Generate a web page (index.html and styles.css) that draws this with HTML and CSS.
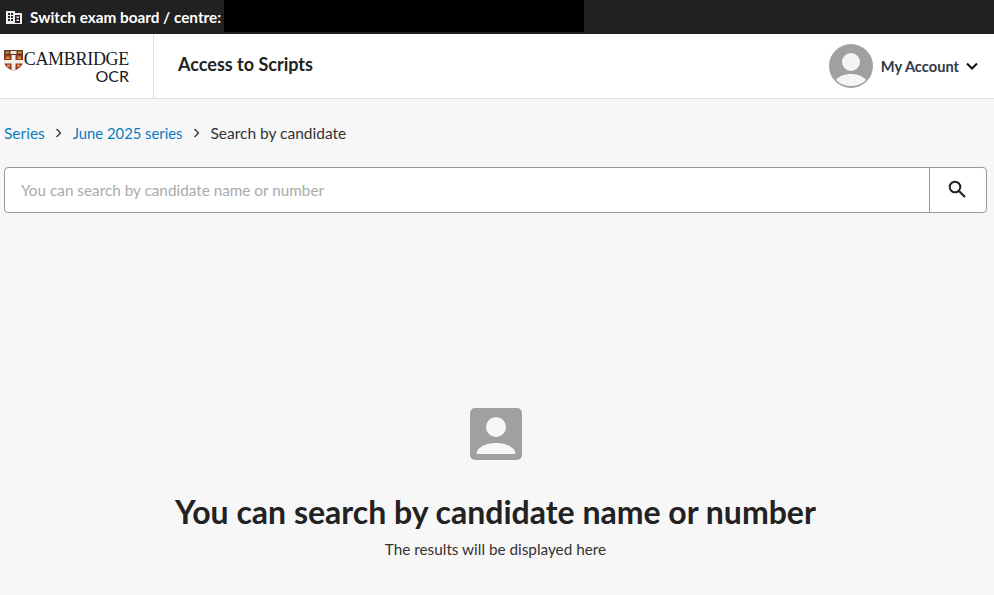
FILE: index.html
```html
<!DOCTYPE html>
<html lang="en">
<head>
<meta charset="utf-8">
<title>Access to Scripts</title>
<link rel="stylesheet" href="styles.css">
</head>
<body>
<div class="topbar">
  <svg class="building" width="16" height="14" viewBox="0 0 16 14"><path fill="#f0f0f0" fill-rule="evenodd" d="M0 1h9v2h6a1 1 0 0 1 1 1v10H0V1zm2 2v2h2V3H2zm3 0v2h2V3H5zM2 6v2h2V6H2zm3 0v2h2V6H5zM2 9v2h2V9H2zm3 0v2h2V9H5zm4-4v8h5V5H9zm1.500 1.500h2.500V8h-2.500V6.500zm0 3h2.500V11h-2.500V9.500z"/></svg>
  <span class="switch">Switch exam board / centre:</span>
  <span class="redact"></span>
</div>
<header class="header">
  <div class="logo">
    <svg class="crest" width="19" height="21" viewBox="0 0 19 21">
      <path fill="#9a3324" d="M0 0h19v11c0 5-4.500 8-9.500 10C4.500 19 0 16 0 11z"/>
      <path fill="#6b3a24" d="M0 0h19v5H0z"/>
      <path fill="#ece4d6" d="M6.500 1h6v3h-6z"/>
      <path fill="#c79a3f" d="M1.500 1.500h3.500v2H1.500zM14 1.500h3.500v2H14z"/>
      <path fill="#f3eee6" d="M7.500 5h4v15.200l-2 .8-2-.8zM0 10h19v3.500H0z"/>
      <path fill="#c79a3f" d="M2 6.500h3.500v2.500H2zM13.500 6.500H17v2.500h-3.500zM3 14.500h3v2.500H3zM13 14.500h3v2.500h-3z"/>
    </svg>
    <div class="wordmark">
      <span class="cambridge">CAMBRIDGE</span>
      <span class="ocr">OCR</span>
    </div>
  </div>
  <div class="app-title">Access to Scripts</div>
  <div class="account">
    <svg class="avatar" width="44" height="44" viewBox="0 0 44 44">
      <circle cx="22" cy="22" r="22" fill="#a0a0a0"/>
      <circle cx="22" cy="18" r="9" fill="#f5f5f5"/>
      <path fill="#f5f5f5" d="M7 36c3-4 9-6 15-6s12 2 15 6c-4 4-9 6-15 6s-11-2-15-6z"/>
    </svg>
    <span class="account-label">My Account</span>
    <svg class="chev" width="12" height="8" viewBox="0 0 12 8"><path d="M1 1.500l5 5 5-5" fill="none" stroke="#111" stroke-width="2"/></svg>
  </div>
</header>
<main class="main">
  <nav class="crumbs">
    <a class="crumb-link crumb-first">Series</a>
    <svg class="sep" width="7" height="10" viewBox="0 0 7 10"><path d="M1.500 1l4 4-4 4" fill="none" stroke="#333" stroke-width="1.300"/></svg>
    <a class="crumb-link crumb-second">June 2025 series</a>
    <svg class="sep" width="7" height="10" viewBox="0 0 7 10"><path d="M1.500 1l4 4-4 4" fill="none" stroke="#333" stroke-width="1.300"/></svg>
    <span class="crumb-current">Search by candidate</span>
  </nav>
  <div class="search">
    <input class="search-input" type="text" placeholder="You can search by candidate name or number">
    <button class="search-btn" aria-label="Search">
      <svg class="search-icon" width="18" height="18" viewBox="0 0 18 18"><circle cx="7" cy="7" r="5.300" fill="none" stroke="#222" stroke-width="2"/><path d="M11 11l6 6" stroke="#222" stroke-width="2.200"/></svg>
    </button>
  </div>
  <section class="empty">
    <svg class="empty-icon" width="52" height="52" viewBox="0 0 52 52">
      <rect width="52" height="52" rx="5" fill="#a0a0a0"/>
      <circle cx="26" cy="19" r="10" fill="#f7f7f7"/>
      <path fill="#f7f7f7" d="M6.500 46c0-6.500 9-11 19.500-11s19.500 4.500 19.500 11z"/>
    </svg>
    <h1 class="empty-title">You can search by candidate name or number</h1>
    <p class="empty-sub">The results will be displayed here</p>
  </section>
</main>
</body>
</html>
```
FILE: styles.css
```css
* { box-sizing: border-box; }
html, body { margin: 0; padding: 0; height: 100%; overflow: hidden; }
body { background: #f7f7f7; font-family: Lato, sans-serif; color: #222; }

.topbar { height: 34px; background: #212121; display: flex; align-items: center; padding-left: 6px; }
.building { flex: none; }
.switch { margin-left: 8px; color: #fff; font-size: 15.3px; font-weight: 700; white-space: nowrap; width: 194px; }
.redact { width: 360px; height: 32px; background: #000; align-self: flex-start; }

.header { height: 65px; background: #fff; border-bottom: 1px solid #e0e0e0; display: flex; align-items: stretch; }
.logo { width: 154px; flex: none; border-right: 1px solid #e0e0e0; display: flex; align-items: flex-start; padding: 16px 0 0 4px; }
.crest { flex: none; }
.wordmark { width: 103px; margin-left: 3px; display: flex; flex-direction: column; align-items: flex-end; color: #1a1a1a; }
.cambridge { font-family: "Liberation Serif", serif; font-size: 18px; line-height: 17px; letter-spacing: -0.3px; margin-top: 1px; white-space: nowrap; }
.ocr { font-family: Lato, sans-serif; font-size: 16px; line-height: 16px; }
.app-title { margin-left: 24px; margin-bottom: 4px; align-self: center; font-size: 18px; font-weight: 700; color: #222; }
.account { margin-left: auto; padding-right: 16px; display: flex; align-items: center; }
.avatar { flex: none; }
.account-label { margin-left: 8px; font-size: 14.650px; font-weight: 700; color: #2f3a47; }
.chev { margin-left: 7px; }

.main { padding: 0 7px 0 4px; }
.crumbs { height: 24px; margin-top: 22px; display: flex; align-items: center; font-size: 15px; }
.crumb-link { color: #0a7cc1; }
.crumb-first { font-size: 15.500px; }
.crumb-second { font-size: 14.800px; }
.crumb-current { color: #333; font-size: 15.500px; }
.sep { margin: 0 10.500px; flex: none; }

.search { margin-top: 22px; height: 46px; border: 1px solid #999; border-radius: 4px; background: #fff; display: flex; overflow: hidden; }
.search-input { flex: 1; min-width: 0; border: 0; outline: 0; padding: 0 16px; background: transparent; font-family: Lato, sans-serif; font-size: 15.300px; color: #222; }
.search-input::placeholder { color: #aaa; opacity: 1; }
.search-btn { width: 57px; flex: none; border: 0; border-left: 1px solid #999; background: transparent; padding: 0; display: flex; align-items: center; justify-content: center; }
.search-icon { margin: 0 2px 2px 0; }

.empty { margin-top: 195px; display: flex; flex-direction: column; align-items: center; }
.empty-icon { flex: none; }
.empty-title { margin: 32px 0 0; font-size: 32px; line-height: 40px; font-weight: 700; color: #222; white-space: nowrap; }
.empty-sub { margin: 7px 0 0; font-size: 15.300px; line-height: 20px; color: #333; }
```
